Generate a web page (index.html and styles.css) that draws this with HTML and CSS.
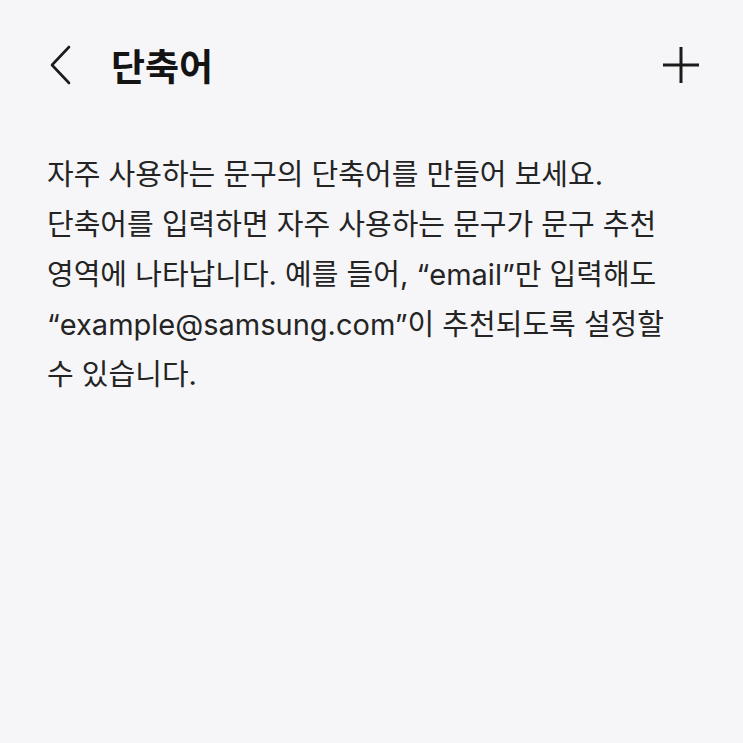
FILE: index.html
```html
<!DOCTYPE html>
<html lang="ko">
<head>
<meta charset="utf-8">
<link rel="stylesheet" href="styles.css">
</head>
<body>
<div class="screen">
  <header class="appbar">
    <div class="left">
      <svg class="back" width="22" height="40" viewBox="0 0 22 40"><path d="M19 2 L2 20 L19 38" fill="none" stroke="#1b1b1b" stroke-width="2.6" stroke-linecap="round" stroke-linejoin="round"/></svg>
      <h1 class="title">단축어</h1>
    </div>
    <svg class="plus" width="38" height="38" viewBox="0 0 38 38"><path d="M19 1 V37 M1 19 H37" fill="none" stroke="#1b1b1b" stroke-width="3"/></svg>
  </header>
  <p class="desc">자주 사용하는 문구의 단축어를 만들어 보세요.<br>단축어를 입력하면 자주 사용하는 문구가 문구 추천<br>영역에 나타납니다. 예를 들어, “email”만 입력해도<br>“example@samsung.com”이 추천되도록 설정할<br>수 있습니다.</p>
</div>
</body>
</html>
```
FILE: styles.css
```css
html, body {
  margin: 0;
  padding: 0;
  background: #f6f6f8;
}
body {
  font-family: Inter, "Noto Sans CJK KR", "Noto Sans", sans-serif;
  color: #1f1f1f;
}
.screen {
  width: 743px;
  height: 743px;
  box-sizing: border-box;
  padding: 0 43px 0 47px;
}
.appbar {
  height: 150px;
  display: flex;
  align-items: flex-start;
  justify-content: space-between;
  padding-top: 45px;
  box-sizing: border-box;
}
.left {
  display: flex;
  align-items: center;
  gap: 39px;
}
.back {
  margin-left: 3px;
}
.title {
  margin: 0;
  font-family: "Noto Sans CJK KR", sans-serif;
  font-size: 37px;
  font-weight: 700;
  line-height: 40px;
  color: #141414;
}
.plus {
  margin-top: 1px;
}
.desc {
  margin: 0;
  font-size: 29px;
  line-height: 50px;
  font-weight: 400;
  color: #242424;
}
```
